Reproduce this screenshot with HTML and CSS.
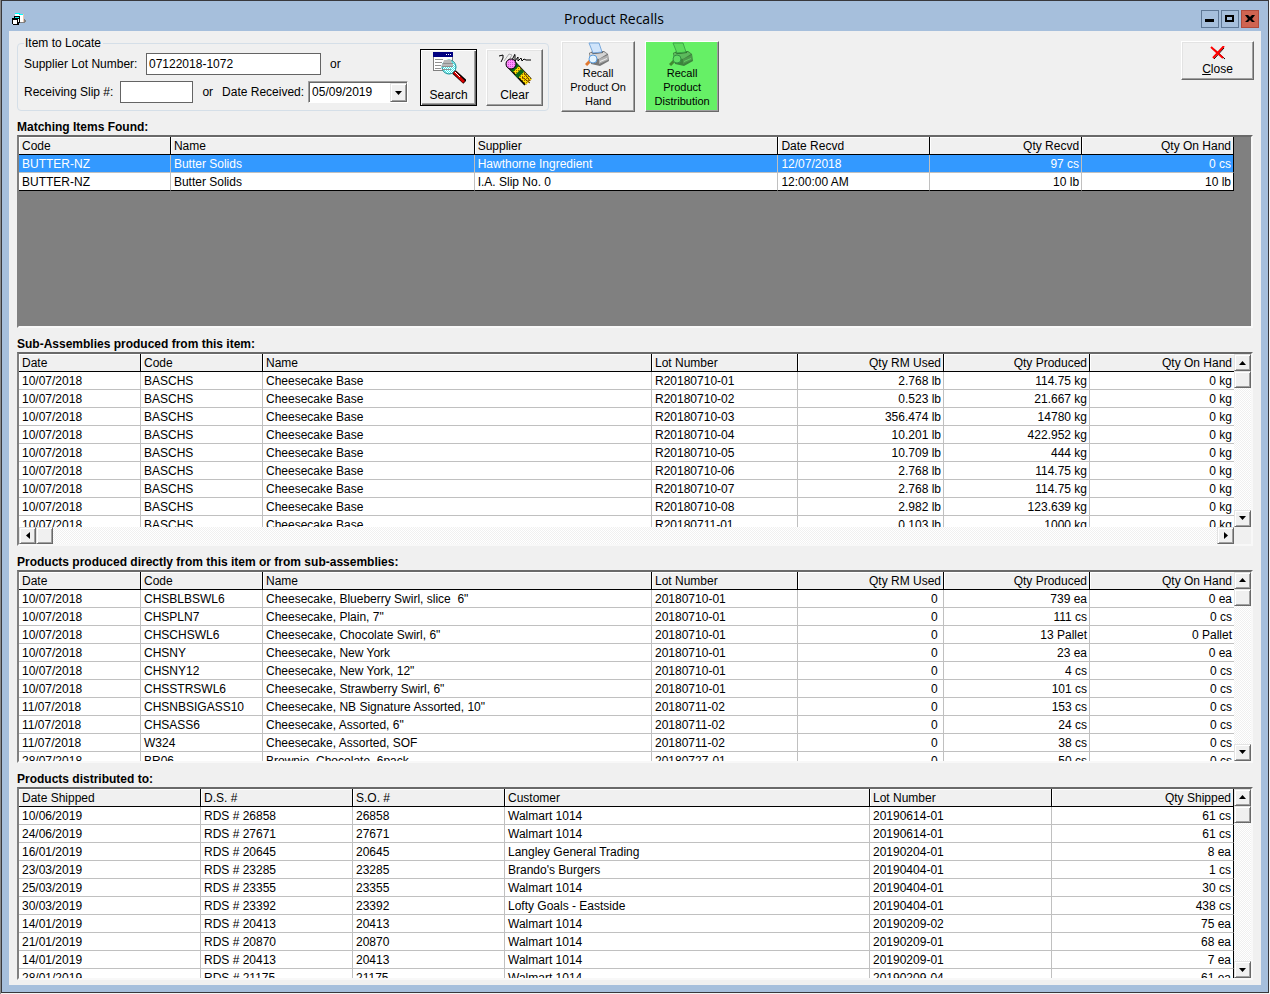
FILE: index.html
```html
<!DOCTYPE html>
<html lang="en">
    <head>
        <meta charset="utf-8">
        <title>Product Recalls</title>
        <link rel="stylesheet" href="styles.css">
    </head>
    <body>
        <div class="window">
            <header class="titlebar">
                <svg class="app-icon" width="16" height="14" viewBox="0 0 16 14" shape-rendering="crispEdges">
                    <path fill="#fff" d="M4 2h9v8H4z"/>
                    <path fill="#e8c8b0" d="M12 2h1v8h-1z"/>
                    <path fill="#808080" d="M9 10h4V7h1v1h1v2h-1v1H9z"/>
                    <path fill="#0ff" d="M4 1h5v1h3v1H8V2H4z"/>
                    <path fill="#000" d="M3 4h6v7H8v2H2v-1H1V6h2z"/>
                    <path fill="#0ff" d="M4 5h4v1H4z"/>
                    <path fill="#fff" d="M2 8h4v4H2zM7 7h1v3H7z"/>
                </svg>
                <h1 class="title">Product Recalls</h1>
                <div class="controls">
                    <button class="control" aria-label="Minimize"><svg width="16" height="16" viewBox="0 0 16 16"><path d="M3 8h9v3H3z"/></svg></button>
                    <button class="control" aria-label="Maximize"><svg width="16" height="16" viewBox="0 0 16 16"><path fill-rule="evenodd" d="M3 4h9v7H3zM5 6v3h5V6z"/></svg></button>
                    <button class="control control-close" aria-label="Close window"><svg width="16" height="16" viewBox="0 0 16 16"><path d="M3 4h3l2 2 2-2h3l-3 4 3 3h-3l-2-2-2 2H3l3-3z"/></svg></button>
                </div>
            </header>
            <main class="content">
                <form class="toolbar">
                    <fieldset class="locate">
                        <legend>Item to Locate</legend>
                        <div class="fields">
                            <div class="field-row">
                                <label class="lot-label" for="lot">Supplier Lot Number:</label>
                                <input class="text-box lot" id="lot" type="text" value="07122018-1072">
                                <span>or</span>
                            </div>
                            <div class="field-row">
                                <label for="slip">Receiving Slip #:</label>
                                <input class="text-box slip" id="slip" type="text">
                                <span>or</span>
                                <label for="received">Date Received:</label>
                                <div class="combo">
                                    <select id="received"><option>05/09/2019</option></select>
                                    <span class="scroll-button combo-arrow"><svg width="7" height="4" viewBox="0 0 7 4"><path d="M0 0h7L3.500 4z"/></svg></span>
                                </div>
                            </div>
                        </div>
                        <button class="button button-square button-default" type="button">
                            <svg width="34" height="34" viewBox="0 0 34 34">
                                <defs>
                                    <pattern id="lens" width="2" height="2" patternUnits="userSpaceOnUse">
                                        <path fill="#fff" d="M0 0h2v2H0z"/>
                                        <path fill="#40e8e8" d="M0 0h1v1H0zM1 1h1v1H1z"/>
                                    </pattern>
                                </defs>
                                <path fill="#808080" d="M1 1h20v18H1z"/>
                                <path fill="#fff" d="M2 5h18v13H2z"/>
                                <path fill="#000080" d="M1 0h20v5H1z"/>
                                <path fill="#fff" d="M14 2h1v1h-1zM16 2h1v1h-1zM18 2h1v1h-1z"/>
                                <path stroke="#909090" d="M3 7.500h8M3 10.500h7M3 13.500h6M3 16.500h6"/>
                                <circle cx="17" cy="15" r="7" fill="url(#lens)" stroke="#0a8c94"/>
                                <path fill="#b8b8b8" d="M12 8h7l1 3h-9zM10 12h11v2H10z"/>
                                <path fill="#909090" d="M11 11h10v1H11zM10 14h11v1H10zM10 17h9v1h-9z"/>
                                <path stroke="#000" stroke-width="5" d="M22 20l11 10"/>
                                <path stroke="#d80000" stroke-width="3" d="M22 20l10 10"/>
                                <path stroke="#fff" d="M23 20l5 5"/>
                            </svg>
                            <span>Search</span>
                        </button>
                        <button class="button button-square" type="button">
                            <svg width="34" height="34" viewBox="0 0 34 34">
                                <defs>
                                    <pattern id="wood" width="2" height="2" patternUnits="userSpaceOnUse">
                                        <path fill="#ffe000" d="M0 0h2v2H0z"/>
                                        <path fill="#a06800" d="M0 0h1v1H0z"/>
                                    </pattern>
                                    <pattern id="rubber" width="2" height="2" patternUnits="userSpaceOnUse">
                                        <path fill="#ff90ff" d="M0 0h2v2H0z"/>
                                        <path fill="#d050d0" d="M0 0h1v1H0z"/>
                                    </pattern>
                                </defs>
                                <path fill="none" stroke="#000" d="M1 4l4-1v3l-2 4M17 2l-3 6M17 3v6l3-4v4l3-3 1 3 2-2 2 1h5"/>
                                <path fill="none" stroke="#aaa" d="M6 9l5-7 3 1-3 5"/>
                                <path stroke="#000" stroke-width="10" d="M12 11l18 19"/>
                                <path stroke="url(#wood)" stroke-width="8" d="M14 13l17 17"/>
                                <path stroke="#0c6818" stroke-width="9" d="M15 14l3 3M20 20l3 3"/>
                                <path stroke="#603000" d="M24 25l8 6M26 21l6 8"/>
                                <circle cx="13" cy="12" r="5" fill="url(#rubber)" stroke="#000"/>
                            </svg>
                            <span>Clear</span>
                        </button>
                    </fieldset>
                    <button class="button button-recall" type="button">
                        <svg width="26" height="24" viewBox="0 0 26 24">
                            <path fill="#777" d="M4 11l4-2h11l4 3 1 7-9 5-9-2z"/>
                            <path fill="#d4d4d4" d="M5 11l3-1h11l3 2-8 5-9-2z"/>
                            <path fill="#444" d="M6 10l11-1 1 2-10 1z"/>
                            <path fill="#b0b0b0" d="M14 17l9-4v5l-9 4z"/>
                            <path fill="#eee" d="M15 19l7-3v1l-7 3z"/>
                            <path fill="#cfe4fb" stroke="#78a8dc" d="M4 1h10l3 9-9 1z"/>
                            <path stroke="#e07830" stroke-width="3" d="M1 23l4-4"/>
                            <circle cx="8" cy="17" r="4" fill="#e4f4ff" stroke="#5c9cdc"/>
                        </svg>
                        <span>Recall<br>Product On<br>Hand</span>
                    </button>
                    <button class="button button-recall button-green" type="button">
                        <svg width="26" height="24" viewBox="0 0 26 24">
                            <path fill="#3c843c" d="M4 11l4-2h11l4 3 1 7-9 5-9-2z"/>
                            <path fill="#5cba5c" d="M5 11l3-1h11l3 2-8 5-9-2z"/>
                            <path fill="#245c24" d="M6 10l11-1 1 2-10 1z"/>
                            <path fill="#4c984c" d="M14 17l9-4v5l-9 4z"/>
                            <path fill="#64d064" d="M15 19l7-3v1l-7 3z"/>
                            <path fill="#5cdc5c" stroke="#3ca848" d="M4 1h10l3 9-9 1z"/>
                            <path stroke="#408a30" stroke-width="3" d="M1 23l4-4"/>
                            <circle cx="8" cy="17" r="4" fill="#60dc64" stroke="#349044"/>
                        </svg>
                        <span>Recall<br>Product<br>Distribution</span>
                    </button>
                    <button class="button button-close" type="button">
                        <svg width="16" height="14" viewBox="0 0 16 14">
                            <path fill="none" stroke="#000" d="M4 3l11 10M14 2L4 13"/>
                            <path fill="none" stroke="#f00" stroke-width="2" d="M1 1l12 11M14 0L3 12"/>
                        </svg>
                        <span><u>C</u>lose</span>
                    </button>
                </form>

                <section class="panel">
                    <h2>Matching Items Found:</h2>
                    <div class="grid grid-empty">
                        <div class="rows">
                            <table class="closed ended">
                                <colgroup><col class="w-eighth"><col class="w-quarter"><col class="w-quarter"><col class="w-eighth"><col class="w-eighth"><col class="w-eighth"></colgroup>
                                <thead>
                                    <tr><th>Code</th><th>Name</th><th>Supplier</th><th>Date Recvd</th><th class="num">Qty Recvd</th><th class="num">Qty On Hand</th></tr>
                                </thead>
                                <tbody>
                                    <tr class="selected"><td>BUTTER-NZ</td><td>Butter Solids</td><td>Hawthorne Ingredient</td><td>12/07/2018</td><td class="num">97 cs</td><td class="num">0 cs</td></tr>
                                    <tr><td>BUTTER-NZ</td><td>Butter Solids</td><td>I.A. Slip No. 0</td><td>12:00:00 AM</td><td class="num">10 lb</td><td class="num">10 lb</td></tr>
                                </tbody>
                            </table>
                        </div>
                    </div>
                </section>

                <section class="panel">
                    <h2>Sub-Assemblies produced from this item:</h2>
                    <div class="grid grid-both">
                        <div class="rows">
                            <table>
                                <colgroup><col class="w-date"><col class="w-date"><col><col class="w-qty"><col class="w-qty"><col class="w-qty"><col class="w-qty-last"></colgroup>
                                <thead>
                                    <tr><th>Date</th><th>Code</th><th>Name</th><th>Lot Number</th><th class="num">Qty RM Used</th><th class="num">Qty Produced</th><th class="num">Qty On Hand</th></tr>
                                </thead>
                                <tbody>
                                    <tr><td>10/07/2018</td><td>BASCHS</td><td>Cheesecake Base</td><td>R20180710-01</td><td class="num">2.768 lb</td><td class="num">114.75 kg</td><td class="num">0 kg</td></tr>
                                    <tr><td>10/07/2018</td><td>BASCHS</td><td>Cheesecake Base</td><td>R20180710-02</td><td class="num">0.523 lb</td><td class="num">21.667 kg</td><td class="num">0 kg</td></tr>
                                    <tr><td>10/07/2018</td><td>BASCHS</td><td>Cheesecake Base</td><td>R20180710-03</td><td class="num">356.474 lb</td><td class="num">14780 kg</td><td class="num">0 kg</td></tr>
                                    <tr><td>10/07/2018</td><td>BASCHS</td><td>Cheesecake Base</td><td>R20180710-04</td><td class="num">10.201 lb</td><td class="num">422.952 kg</td><td class="num">0 kg</td></tr>
                                    <tr><td>10/07/2018</td><td>BASCHS</td><td>Cheesecake Base</td><td>R20180710-05</td><td class="num">10.709 lb</td><td class="num">444 kg</td><td class="num">0 kg</td></tr>
                                    <tr><td>10/07/2018</td><td>BASCHS</td><td>Cheesecake Base</td><td>R20180710-06</td><td class="num">2.768 lb</td><td class="num">114.75 kg</td><td class="num">0 kg</td></tr>
                                    <tr><td>10/07/2018</td><td>BASCHS</td><td>Cheesecake Base</td><td>R20180710-07</td><td class="num">2.768 lb</td><td class="num">114.75 kg</td><td class="num">0 kg</td></tr>
                                    <tr><td>10/07/2018</td><td>BASCHS</td><td>Cheesecake Base</td><td>R20180710-08</td><td class="num">2.982 lb</td><td class="num">123.639 kg</td><td class="num">0 kg</td></tr>
                                    <tr><td>10/07/2018</td><td>BASCHS</td><td>Cheesecake Base</td><td>R20180711-01</td><td class="num">0.103 lb</td><td class="num">1000 kg</td><td class="num">0 kg</td></tr>
                                </tbody>
                            </table>
                        </div>
                        <div class="scrollbar vertical">
                            <button class="scroll-button" aria-label="Scroll up"><svg width="7" height="4" viewBox="0 0 7 4"><path d="M0 4h7L3.500 0z"/></svg></button>
                            <span class="scroll-button thumb"></span>
                            <button class="scroll-button last" aria-label="Scroll down"><svg width="7" height="4" viewBox="0 0 7 4"><path d="M0 0h7L3.500 4z"/></svg></button>
                        </div>
                        <div class="scrollbar horizontal">
                            <button class="scroll-button" aria-label="Scroll left"><svg width="4" height="7" viewBox="0 0 4 7"><path d="M4 0v7L0 3.500z"/></svg></button>
                            <span class="scroll-button thumb"></span>
                            <button class="scroll-button last" aria-label="Scroll right"><svg width="4" height="7" viewBox="0 0 4 7"><path d="M0 0v7l4-3.500z"/></svg></button>
                        </div>
                    </div>
                </section>

                <section class="panel">
                    <h2>Products produced directly from this item or from sub-assemblies:</h2>
                    <div class="grid">
                        <div class="rows">
                            <table>
                                <colgroup><col class="w-date"><col class="w-date"><col><col class="w-qty"><col class="w-qty"><col class="w-qty"><col class="w-qty-last"></colgroup>
                                <thead>
                                    <tr><th>Date</th><th>Code</th><th>Name</th><th>Lot Number</th><th class="num">Qty RM Used</th><th class="num">Qty Produced</th><th class="num">Qty On Hand</th></tr>
                                </thead>
                                <tbody>
                                    <tr><td>10/07/2018</td><td>CHSBLBSWL6</td><td>Cheesecake, Blueberry Swirl, slice&nbsp; 6"</td><td>20180710-01</td><td class="num">0&nbsp;</td><td class="num">739 ea</td><td class="num">0 ea</td></tr>
                                    <tr><td>10/07/2018</td><td>CHSPLN7</td><td>Cheesecake, Plain, 7"</td><td>20180710-01</td><td class="num">0&nbsp;</td><td class="num">111 cs</td><td class="num">0 cs</td></tr>
                                    <tr><td>10/07/2018</td><td>CHSCHSWL6</td><td>Cheesecake, Chocolate Swirl, 6"</td><td>20180710-01</td><td class="num">0&nbsp;</td><td class="num">13 Pallet</td><td class="num">0 Pallet</td></tr>
                                    <tr><td>10/07/2018</td><td>CHSNY</td><td>Cheesecake, New York</td><td>20180710-01</td><td class="num">0&nbsp;</td><td class="num">23 ea</td><td class="num">0 ea</td></tr>
                                    <tr><td>10/07/2018</td><td>CHSNY12</td><td>Cheesecake, New York, 12"</td><td>20180710-01</td><td class="num">0&nbsp;</td><td class="num">4 cs</td><td class="num">0 cs</td></tr>
                                    <tr><td>10/07/2018</td><td>CHSSTRSWL6</td><td>Cheesecake, Strawberry Swirl, 6"</td><td>20180710-01</td><td class="num">0&nbsp;</td><td class="num">101 cs</td><td class="num">0 cs</td></tr>
                                    <tr><td>11/07/2018</td><td>CHSNBSIGASS10</td><td>Cheesecake, NB Signature Assorted, 10"</td><td>20180711-02</td><td class="num">0&nbsp;</td><td class="num">153 cs</td><td class="num">0 cs</td></tr>
                                    <tr><td>11/07/2018</td><td>CHSASS6</td><td>Cheesecake, Assorted, 6"</td><td>20180711-02</td><td class="num">0&nbsp;</td><td class="num">24 cs</td><td class="num">0 cs</td></tr>
                                    <tr><td>11/07/2018</td><td>W324</td><td>Cheesecake, Assorted, SOF</td><td>20180711-02</td><td class="num">0&nbsp;</td><td class="num">38 cs</td><td class="num">0 cs</td></tr>
                                    <tr><td>28/07/2018</td><td>BR06</td><td>Brownie, Chocolate, 6pack</td><td>20180727-01</td><td class="num">0&nbsp;</td><td class="num">50 cs</td><td class="num">0 cs</td></tr>
                                </tbody>
                            </table>
                        </div>
                        <div class="scrollbar vertical">
                            <button class="scroll-button" aria-label="Scroll up"><svg width="7" height="4" viewBox="0 0 7 4"><path d="M0 4h7L3.500 0z"/></svg></button>
                            <span class="scroll-button thumb"></span>
                            <button class="scroll-button last" aria-label="Scroll down"><svg width="7" height="4" viewBox="0 0 7 4"><path d="M0 0h7L3.500 4z"/></svg></button>
                        </div>
                    </div>
                </section>

                <section class="panel">
                    <h2>Products distributed to:</h2>
                    <div class="grid">
                        <div class="rows">
                            <table class="ended">
                                <colgroup><col class="w-lot"><col class="w-order"><col class="w-order"><col><col class="w-lot"><col class="w-lot"></colgroup>
                                <thead>
                                    <tr><th>Date Shipped</th><th>D.S. #</th><th>S.O. #</th><th>Customer</th><th>Lot Number</th><th class="num">Qty Shipped</th></tr>
                                </thead>
                                <tbody>
                                    <tr><td>10/06/2019</td><td>RDS # 26858</td><td>26858</td><td>Walmart 1014</td><td>20190614-01</td><td class="num">61 cs</td></tr>
                                    <tr><td>24/06/2019</td><td>RDS # 27671</td><td>27671</td><td>Walmart 1014</td><td>20190614-01</td><td class="num">61 cs</td></tr>
                                    <tr><td>16/01/2019</td><td>RDS # 20645</td><td>20645</td><td>Langley General Trading</td><td>20190204-01</td><td class="num">8 ea</td></tr>
                                    <tr><td>23/03/2019</td><td>RDS # 23285</td><td>23285</td><td>Brando's Burgers</td><td>20190404-01</td><td class="num">1 cs</td></tr>
                                    <tr><td>25/03/2019</td><td>RDS # 23355</td><td>23355</td><td>Walmart 1014</td><td>20190404-01</td><td class="num">30 cs</td></tr>
                                    <tr><td>30/03/2019</td><td>RDS # 23392</td><td>23392</td><td>Lofty Goals - Eastside</td><td>20190404-01</td><td class="num">438 cs</td></tr>
                                    <tr><td>14/01/2019</td><td>RDS # 20413</td><td>20413</td><td>Walmart 1014</td><td>20190209-02</td><td class="num">75 ea</td></tr>
                                    <tr><td>21/01/2019</td><td>RDS # 20870</td><td>20870</td><td>Walmart 1014</td><td>20190209-01</td><td class="num">68 ea</td></tr>
                                    <tr><td>14/01/2019</td><td>RDS # 20413</td><td>20413</td><td>Walmart 1014</td><td>20190209-01</td><td class="num">7 ea</td></tr>
                                    <tr><td>28/01/2019</td><td>RDS # 21175</td><td>21175</td><td>Walmart 1014</td><td>20190209-04</td><td class="num">61 ea</td></tr>
                                </tbody>
                            </table>
                        </div>
                        <div class="scrollbar vertical">
                            <button class="scroll-button" aria-label="Scroll up"><svg width="7" height="4" viewBox="0 0 7 4"><path d="M0 4h7L3.500 0z"/></svg></button>
                            <span class="scroll-button thumb"></span>
                            <button class="scroll-button last" aria-label="Scroll down"><svg width="7" height="4" viewBox="0 0 7 4"><path d="M0 0h7L3.500 4z"/></svg></button>
                        </div>
                    </div>
                </section>
            </main>
        </div>
    </body>
</html>
```

FILE: styles.css
```css
* {
    box-sizing: border-box;
}
body {
    margin: 0;
    padding: 0 1px 1px 0;
    height: 100vh;
    border-left: 1px solid #8c8c8c;
    background: #f4f4f4;
    font-family: "Liberation Sans", Arial, sans-serif;
    font-size: 12px;
    line-height: 14px;
    color: #000;
}
button, input, select {
    font: inherit;
    color: inherit;
    border-radius: 0;
}
.window {
    display: flex;
    flex-direction: column;
    height: 100%;
    border: 1px solid #38383c;
    background: #a6bfdc;
    padding: 0 7px 7px 7px;
}

/* title bar */
.titlebar {
    display: flex;
    align-items: center;
    height: 30px;
    padding: 6px 2px 0 2px;
}
.app-icon {
    display: block;
}
.title {
    flex: 1;
    margin: 0;
    font-family: "Open Sans", "Segoe UI", sans-serif;
    font-size: 14px;
    line-height: 20px;
    font-weight: normal;
    text-align: center;
}
.controls {
    display: flex;
    gap: 2px;
}
.control {
    width: 18px;
    height: 18px;
    padding: 0;
    border: 1px solid #5f7896;
    background: #a6bfdc;
}
.control svg {
    display: block;
}
.control-close {
    border-color: #b04a3a;
    background: #cf6450;
}

.content {
    flex: 1;
    display: flex;
    flex-direction: column;
    min-height: 0;
    padding: 6px 8px 5px 8px;
    background: #f0f0f0;
}

/* search fields and buttons */
.toolbar {
    display: flex;
    align-items: flex-start;
    height: 74px;
    margin-right: -1px;
}
.locate {
    display: flex;
    gap: 9px;
    margin: 0 12px 0 0;
    padding: 0 5px 4px 6px;
    border: 1px solid #d5dfe8;
    border-radius: 4px;
}
.locate legend {
    padding: 0 2px 0 1px;
    line-height: 12px;
}
.fields {
    display: flex;
    flex-direction: column;
    gap: 6px;
    padding: 4px 3px 0 0;
}
.field-row {
    display: flex;
    align-items: center;
    height: 22px;
    gap: 7px;
}
.field-row span {
    padding: 0 2px;
}
.lot-label {
    min-width: 115px;
}
.text-box {
    height: 22px;
    padding: 0 2px 1px 2px;
    border: 1px solid #646464;
    background: #fff;
}
.lot {
    width: 175px;
}
.slip {
    width: 73px;
}
.combo {
    display: flex;
    width: 100px;
    height: 22px;
    border: 1px solid;
    border-color: #a0a0a0 #fff #fff #a0a0a0;
    background: #fff;
    box-shadow: inset 1px 1px #696969;
}
.field-row .combo {
    margin-left: -3px;
}
.combo select {
    flex: 1;
    min-width: 0;
    padding: 0 0 0 3px;
    border: 0;
    background: transparent;
    appearance: none;
}
.button {
    display: flex;
    flex-direction: column;
    align-items: center;
    padding: 0;
    border: 1px solid;
    border-color: #fff #696969 #696969 #fff;
    background: #f0f0f0;
    box-shadow: inset -1px -1px #a0a0a0, inset 1px 1px #e3e3e3;
}
.button-square {
    width: 57px;
    height: 57px;
    padding-top: 2px;
    gap: 2px;
}
.button-default {
    border-color: #000;
    box-shadow: inset 1px 1px #fff, inset -1px -1px #696969, inset -2px -2px #a0a0a0;
}
.button-recall {
    width: 74px;
    height: 71px;
    margin: 4px 10px 0 0;
    font-size: 11px;
}
.button-green {
    background: #66f066;
    box-shadow: inset -1px -1px #a0a0a0;
}
.button-close {
    width: 73px;
    height: 39px;
    margin: 4px 0 0 auto;
    padding-top: 4px;
    gap: 2px;
}

/* grids */
.panel {
    flex: 1 1 0;
    display: flex;
    flex-direction: column;
    min-height: 0;
}
.panel h2 {
    margin: 0;
    padding-top: 8px;
    font-size: 12px;
    line-height: 16px;
    font-weight: bold;
}
.grid {
    flex: 1;
    display: grid;
    grid-template: minmax(0, 1fr) / minmax(0, 1fr) 17px;
    min-height: 0;
    border: 2px solid;
    border-color: #696969 #f8f8f8 #f8f8f8 #808080;
}
.grid-both {
    grid-template-rows: minmax(0, 1fr) 17px;
}
.grid-empty {
    background: #808080;
}
.rows {
    overflow: hidden;
}
table {
    width: 100%;
    table-layout: fixed;
    border-collapse: separate;
    border-spacing: 0;
    background: #fff;
}
th, td {
    height: 18px;
    padding: 2px 2px 0 3px;
    border: 0 solid #c0c0c0;
    border-width: 0 1px 1px 0;
    line-height: 15px;
    font-weight: normal;
    text-align: left;
    white-space: nowrap;
    overflow: hidden;
}
th {
    border-color: #000;
    background: #f0f0f0;
    box-shadow: inset 1px 1px #fff;
}
th:last-child, td:last-child {
    border-right: 0;
}
.ended th:last-child, .ended td:last-child {
    border-right: 1px solid #000;
}
.closed tr:last-child td {
    border-bottom-color: #000;
}
.num {
    text-align: right;
}
.selected td {
    background: #3399ff;
    color: #fff;
}
.w-eighth {
    width: 12.5%;
}
.w-quarter {
    width: 25%;
}
.w-date {
    width: 122px;
}
.w-qty {
    width: 146px;
}
.w-qty-last {
    width: 144px;
}
.w-lot {
    width: 182px;
}
.w-order {
    width: 152px;
}

/* scroll bars */
.scrollbar {
    display: flex;
    background: repeating-conic-gradient(#fff 0 25%, #f0f0f0 0 50%) 0 0 / 2px 2px;
}
.vertical {
    flex-direction: column;
}
.scroll-button {
    display: flex;
    align-items: center;
    justify-content: center;
    flex: none;
    width: 17px;
    height: 17px;
    padding: 0;
    border: 1px solid;
    border-color: #e3e3e3 #696969 #696969 #e3e3e3;
    background: #f0f0f0;
    box-shadow: inset 1px 1px #fff, inset -1px -1px #a0a0a0;
}
.last {
    margin: auto 0 0 0;
}
.horizontal .last {
    margin: 0 0 0 auto;
}
.combo-arrow {
    height: 19px;
    margin-top: 1px;
    pointer-events: none;
}
.field-row .combo-arrow {
    padding: 0;
}
```
